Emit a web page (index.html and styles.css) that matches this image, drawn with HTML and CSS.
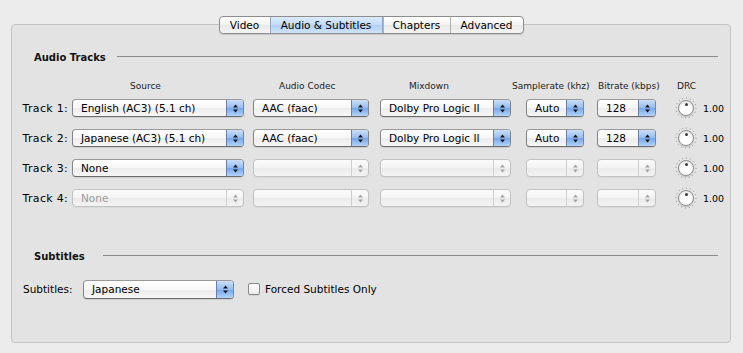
FILE: index.html
```html
<!DOCTYPE html>
<html>
<head>
<meta charset="utf-8">
<link rel="stylesheet" href="styles.css">
</head>
<body>
<div class="window">
  <div class="tabs">
    <span class="tab tab-video">Video</span>
    <span class="tab tab-audio selected">Audio &amp; Subtitles</span>
    <span class="tab tab-chapters">Chapters</span>
    <span class="tab tab-advanced">Advanced</span>
  </div>
  <div class="panel">
    <div class="section">
      <span class="section-title">Audio Tracks</span>
      <span class="rule rule-audio"></span>
    </div>
    <div class="tracks">
      <div class="hdr"></div>
      <div class="hdr"><span class="h-src">Source</span></div>
      <div class="hdr"><span class="h-codec">Audio Codec</span></div>
      <div class="hdr"><span class="h-mix">Mixdown</span></div>
      <div class="hdr"><span class="h-sr">Samplerate (khz)</span></div>
      <div class="hdr"><span class="h-br">Bitrate (kbps)</span></div>
      <div class="hdr"><span class="h-drc">DRC</span></div>

      <!-- Track 1 -->
      <div class="lbl">Track 1:</div>
      <div class="cell"><div class="popup w-src"><span class="val">English (AC3) (5.1 ch)</span><span class="arrows"><svg viewBox="0 0 7 11" width="7" height="11"><polygon points="1,4.5 6,4.5 3.5,1.5"/><polygon points="1,6.5 6,6.5 3.5,9.5"/></svg></span></div></div>
      <div class="cell"><div class="popup w-codec"><span class="val">AAC (faac)</span><span class="arrows"><svg viewBox="0 0 7 11" width="7" height="11"><polygon points="1,4.5 6,4.5 3.5,1.5"/><polygon points="1,6.5 6,6.5 3.5,9.5"/></svg></span></div></div>
      <div class="cell"><div class="popup w-mix"><span class="val">Dolby Pro Logic II</span><span class="arrows"><svg viewBox="0 0 7 11" width="7" height="11"><polygon points="1,4.5 6,4.5 3.5,1.5"/><polygon points="1,6.5 6,6.5 3.5,9.5"/></svg></span></div></div>
      <div class="cell"><div class="popup w-sr"><span class="val">Auto</span><span class="arrows"><svg viewBox="0 0 7 11" width="7" height="11"><polygon points="1,4.5 6,4.5 3.5,1.5"/><polygon points="1,6.5 6,6.5 3.5,9.5"/></svg></span></div></div>
      <div class="cell"><div class="popup w-br"><span class="val">128</span><span class="arrows"><svg viewBox="0 0 7 11" width="7" height="11"><polygon points="1,4.5 6,4.5 3.5,1.5"/><polygon points="1,6.5 6,6.5 3.5,9.5"/></svg></span></div></div>
      <div class="cell drc"><span class="ring"><svg class="dots" viewBox="0 0 22 22" width="22" height="22"><circle cx="11" cy="11" r="10" /></svg><span class="knob"><span class="dot"></span></span></span><span class="drc-val">1.00</span></div>

      <!-- Track 2 -->
      <div class="lbl">Track 2:</div>
      <div class="cell"><div class="popup w-src"><span class="val">Japanese (AC3) (5.1 ch)</span><span class="arrows"><svg viewBox="0 0 7 11" width="7" height="11"><polygon points="1,4.5 6,4.5 3.5,1.5"/><polygon points="1,6.5 6,6.5 3.5,9.5"/></svg></span></div></div>
      <div class="cell"><div class="popup w-codec"><span class="val">AAC (faac)</span><span class="arrows"><svg viewBox="0 0 7 11" width="7" height="11"><polygon points="1,4.5 6,4.5 3.5,1.5"/><polygon points="1,6.5 6,6.5 3.5,9.5"/></svg></span></div></div>
      <div class="cell"><div class="popup w-mix"><span class="val">Dolby Pro Logic II</span><span class="arrows"><svg viewBox="0 0 7 11" width="7" height="11"><polygon points="1,4.5 6,4.5 3.5,1.5"/><polygon points="1,6.5 6,6.5 3.5,9.5"/></svg></span></div></div>
      <div class="cell"><div class="popup w-sr"><span class="val">Auto</span><span class="arrows"><svg viewBox="0 0 7 11" width="7" height="11"><polygon points="1,4.5 6,4.5 3.5,1.5"/><polygon points="1,6.5 6,6.5 3.5,9.5"/></svg></span></div></div>
      <div class="cell"><div class="popup w-br"><span class="val">128</span><span class="arrows"><svg viewBox="0 0 7 11" width="7" height="11"><polygon points="1,4.5 6,4.5 3.5,1.5"/><polygon points="1,6.5 6,6.5 3.5,9.5"/></svg></span></div></div>
      <div class="cell drc"><span class="ring"><svg class="dots" viewBox="0 0 22 22" width="22" height="22"><circle cx="11" cy="11" r="10" /></svg><span class="knob"><span class="dot"></span></span></span><span class="drc-val">1.00</span></div>

      <!-- Track 3 -->
      <div class="lbl">Track 3:</div>
      <div class="cell"><div class="popup w-src"><span class="val">None</span><span class="arrows"><svg viewBox="0 0 7 11" width="7" height="11"><polygon points="1,4.5 6,4.5 3.5,1.5"/><polygon points="1,6.5 6,6.5 3.5,9.5"/></svg></span></div></div>
      <div class="cell"><div class="popup w-codec disabled"><span class="val"></span><span class="arrows"><svg viewBox="0 0 7 11" width="7" height="11"><polygon points="1,4.5 6,4.5 3.5,1.5"/><polygon points="1,6.5 6,6.5 3.5,9.5"/></svg></span></div></div>
      <div class="cell"><div class="popup w-mix disabled"><span class="val"></span><span class="arrows"><svg viewBox="0 0 7 11" width="7" height="11"><polygon points="1,4.5 6,4.5 3.5,1.5"/><polygon points="1,6.5 6,6.5 3.5,9.5"/></svg></span></div></div>
      <div class="cell"><div class="popup w-sr disabled"><span class="val"></span><span class="arrows"><svg viewBox="0 0 7 11" width="7" height="11"><polygon points="1,4.5 6,4.5 3.5,1.5"/><polygon points="1,6.5 6,6.5 3.5,9.5"/></svg></span></div></div>
      <div class="cell"><div class="popup w-br disabled"><span class="val"></span><span class="arrows"><svg viewBox="0 0 7 11" width="7" height="11"><polygon points="1,4.5 6,4.5 3.5,1.5"/><polygon points="1,6.5 6,6.5 3.5,9.5"/></svg></span></div></div>
      <div class="cell drc"><span class="ring"><svg class="dots" viewBox="0 0 22 22" width="22" height="22"><circle cx="11" cy="11" r="10" /></svg><span class="knob"><span class="dot"></span></span></span><span class="drc-val">1.00</span></div>

      <!-- Track 4 -->
      <div class="lbl">Track 4:</div>
      <div class="cell"><div class="popup w-src disabled"><span class="val">None</span><span class="arrows"><svg viewBox="0 0 7 11" width="7" height="11"><polygon points="1,4.5 6,4.5 3.5,1.5"/><polygon points="1,6.5 6,6.5 3.5,9.5"/></svg></span></div></div>
      <div class="cell"><div class="popup w-codec disabled"><span class="val"></span><span class="arrows"><svg viewBox="0 0 7 11" width="7" height="11"><polygon points="1,4.5 6,4.5 3.5,1.5"/><polygon points="1,6.5 6,6.5 3.5,9.5"/></svg></span></div></div>
      <div class="cell"><div class="popup w-mix disabled"><span class="val"></span><span class="arrows"><svg viewBox="0 0 7 11" width="7" height="11"><polygon points="1,4.5 6,4.5 3.5,1.5"/><polygon points="1,6.5 6,6.5 3.5,9.5"/></svg></span></div></div>
      <div class="cell"><div class="popup w-sr disabled"><span class="val"></span><span class="arrows"><svg viewBox="0 0 7 11" width="7" height="11"><polygon points="1,4.5 6,4.5 3.5,1.5"/><polygon points="1,6.5 6,6.5 3.5,9.5"/></svg></span></div></div>
      <div class="cell"><div class="popup w-br disabled"><span class="val"></span><span class="arrows"><svg viewBox="0 0 7 11" width="7" height="11"><polygon points="1,4.5 6,4.5 3.5,1.5"/><polygon points="1,6.5 6,6.5 3.5,9.5"/></svg></span></div></div>
      <div class="cell drc"><span class="ring"><svg class="dots" viewBox="0 0 22 22" width="22" height="22"><circle cx="11" cy="11" r="10" /></svg><span class="knob"><span class="dot"></span></span></span><span class="drc-val">1.00</span></div>
    </div>

    <div class="section section-subs">
      <span class="section-title">Subtitles</span>
      <span class="rule rule-subs"></span>
    </div>
    <div class="subs-row">
      <span class="subs-lbl">Subtitles:</span>
      <div class="popup w-subs"><span class="val">Japanese</span><span class="arrows"><svg viewBox="0 0 7 11" width="7" height="11"><polygon points="1,4.5 6,4.5 3.5,1.5"/><polygon points="1,6.5 6,6.5 3.5,9.5"/></svg></span></div>
      <span class="checkbox"></span>
      <span class="check-lbl">Forced Subtitles Only</span>
    </div>
  </div>
</div>
</body>
</html>
```

FILE: styles.css
```css
html, body {
  margin: 0;
  padding: 0;
  height: 100%;
}
body {
  background: #ececec;
  font-family: "DejaVu Sans", sans-serif;
  font-size: 10.5px;
  color: #000;
}
.window {
  box-sizing: border-box;
  height: 353px;
  padding: 16px 12px 10px 11px;
  display: flex;
  flex-direction: column;
}
.tabs {
  align-self: center;
  display: flex;
  height: 18px;
  box-sizing: border-box;
  border: 1px solid #8d8d8d;
  border-radius: 4px;
  background: linear-gradient(#ffffff, #f3f3f3 50%, #e9e9e9 51%, #f4f4f4);
  margin-bottom: -10px;
  position: relative;
  z-index: 1;
  overflow: hidden;
  box-shadow: 0 1px 1px rgba(0,0,0,0.12);
}
.tab {
  box-sizing: border-box;
  line-height: 16px;
  text-align: center;
  font-size: 10.5px;
  color: #000;
}
.tab + .tab { border-left: 1px solid #b3b3b3; }
.tab-video { width: 50px; }
.tab-audio { width: 113px; }
.tab-chapters { width: 67px; }
.tab-advanced { width: 73px; }
.tab.selected {
  background: linear-gradient(#dcebfc, #c3dbf8 50%, #b1d0f6 51%, #cfe3fb);
  border-left-color: #8ea6c8;
  border-right: 1px solid #8ea6c8;
}
.panel {
  flex: 1;
  box-sizing: border-box;
  background: #e3e3e3;
  border: 1px solid #c3c3c3;
  border-radius: 4px;
  padding: 25px 12px 0 10px;
}
.section {
  display: flex;
  align-items: center;
  height: 14px;
  margin-left: 12px;
}
.section-title {
  font-weight: bold;
  font-size: 10px;
  color: #111;
}
.rule {
  flex: 1;
  height: 1px;
  background: #8c8c8c;
  margin-top: -1px;
}
.rule-audio { margin-left: 11px; }
.rule-subs { margin-left: 18px; }
.section-subs { margin-top: 36px; }

.tracks {
  margin-top: 15px;
  display: grid;
  grid-template-columns: 50px 181px 127px 146px 71px 76px auto;
  grid-template-rows: 14px repeat(4, 30px);
}
.hdr {
  font-size: 9px;
  color: #222;
  line-height: 14px;
  white-space: nowrap;
}
.h-src { margin-left: 58px; }
.h-codec { margin-left: 26px; }
.h-mix { margin-left: 29px; }
.h-sr { margin-left: -14px; }
.h-br { margin-left: 1px; }
.h-drc { margin-left: 4px; }

.lbl {
  display: flex;
  align-items: center;
  justify-content: flex-end;
  padding-right: 4px;
  font-size: 11px;
  letter-spacing: 0.3px;
  white-space: nowrap;
}
.cell {
  display: flex;
  align-items: center;
}
.popup {
  box-sizing: border-box;
  height: 18px;
  display: flex;
  border: 1px solid #858585;
  border-top-color: #9a9a9a;
  border-bottom-color: #6c6c6c;
  border-radius: 4px;
  background: linear-gradient(#ffffff, #f7f7f7 50%, #ececec 51%, #f7f7f7);
  box-shadow: 0 1px 1px rgba(0,0,0,0.10);
  overflow: hidden;
}
.popup .val {
  flex: 1;
  padding-left: 8px;
  line-height: 16px;
  white-space: nowrap;
  overflow: hidden;
}
.popup .arrows {
  width: 16px;
  display: flex;
  align-items: center;
  justify-content: center;
  border-left: 1px solid #6680b0;
  background: linear-gradient(#cadff9, #95bcef 50%, #76a5ea 51%, #b3d4fa);
}
.popup .arrows svg { fill: #151515; }
.popup.disabled {
  border-color: #c2c2c2;
  background: linear-gradient(#fbfbfb, #f3f3f3 50%, #ebebeb 51%, #f3f3f3);
  box-shadow: 0 1px 1px rgba(0,0,0,0.05);
}
.popup.disabled .val { color: #9c9c9c; }
.popup.disabled .arrows {
  background: transparent;
  border-left-color: #cfcfcf;
}
.popup.disabled .arrows svg { fill: #a5a5a5; }

.w-src { width: 172px; }
.w-codec { width: 116px; }
.w-mix { width: 131px; }
.w-sr { width: 58px; }
.w-br { width: 59px; }
.w-subs { width: 151px; height: 19px; }

.drc { padding-left: 2px; }
.ring {
  width: 22px;
  height: 22px;
  display: grid;
  place-items: center;
}
.ring > * { grid-area: 1 / 1; }
.dots circle {
  fill: none;
  stroke: #8a8a8a;
  stroke-width: 1;
  stroke-dasharray: 1 2.9;
}
.knob {
  box-sizing: border-box;
  width: 16px;
  height: 16px;
  border-radius: 50%;
  border: 1px solid #8e8e8e;
  background: radial-gradient(circle at 50% 65%, #ffffff 35%, #efefef 65%, #d2d2d2 100%);
  box-shadow: 0 1px 1px rgba(0,0,0,0.18);
  display: flex;
  justify-content: center;
  padding-top: 2px;
}
.dot {
  width: 3px;
  height: 3px;
  border-radius: 50%;
  background: #3a3a3a;
}
.drc-val {
  margin-left: 6px;
  font-size: 9.5px;
}

.subs-row {
  margin-top: 16px;
  height: 20px;
  display: flex;
  align-items: center;
  padding-left: 1px;
}
.subs-lbl {
  width: 60px;
}
.checkbox {
  box-sizing: border-box;
  width: 12px;
  height: 12px;
  margin-left: 14px;
  border: 1px solid #888;
  border-radius: 2px;
  background: linear-gradient(#ffffff, #ececec);
  box-shadow: 0 1px 0 rgba(0,0,0,0.08);
}
.check-lbl {
  margin-left: 5px;
}
```
